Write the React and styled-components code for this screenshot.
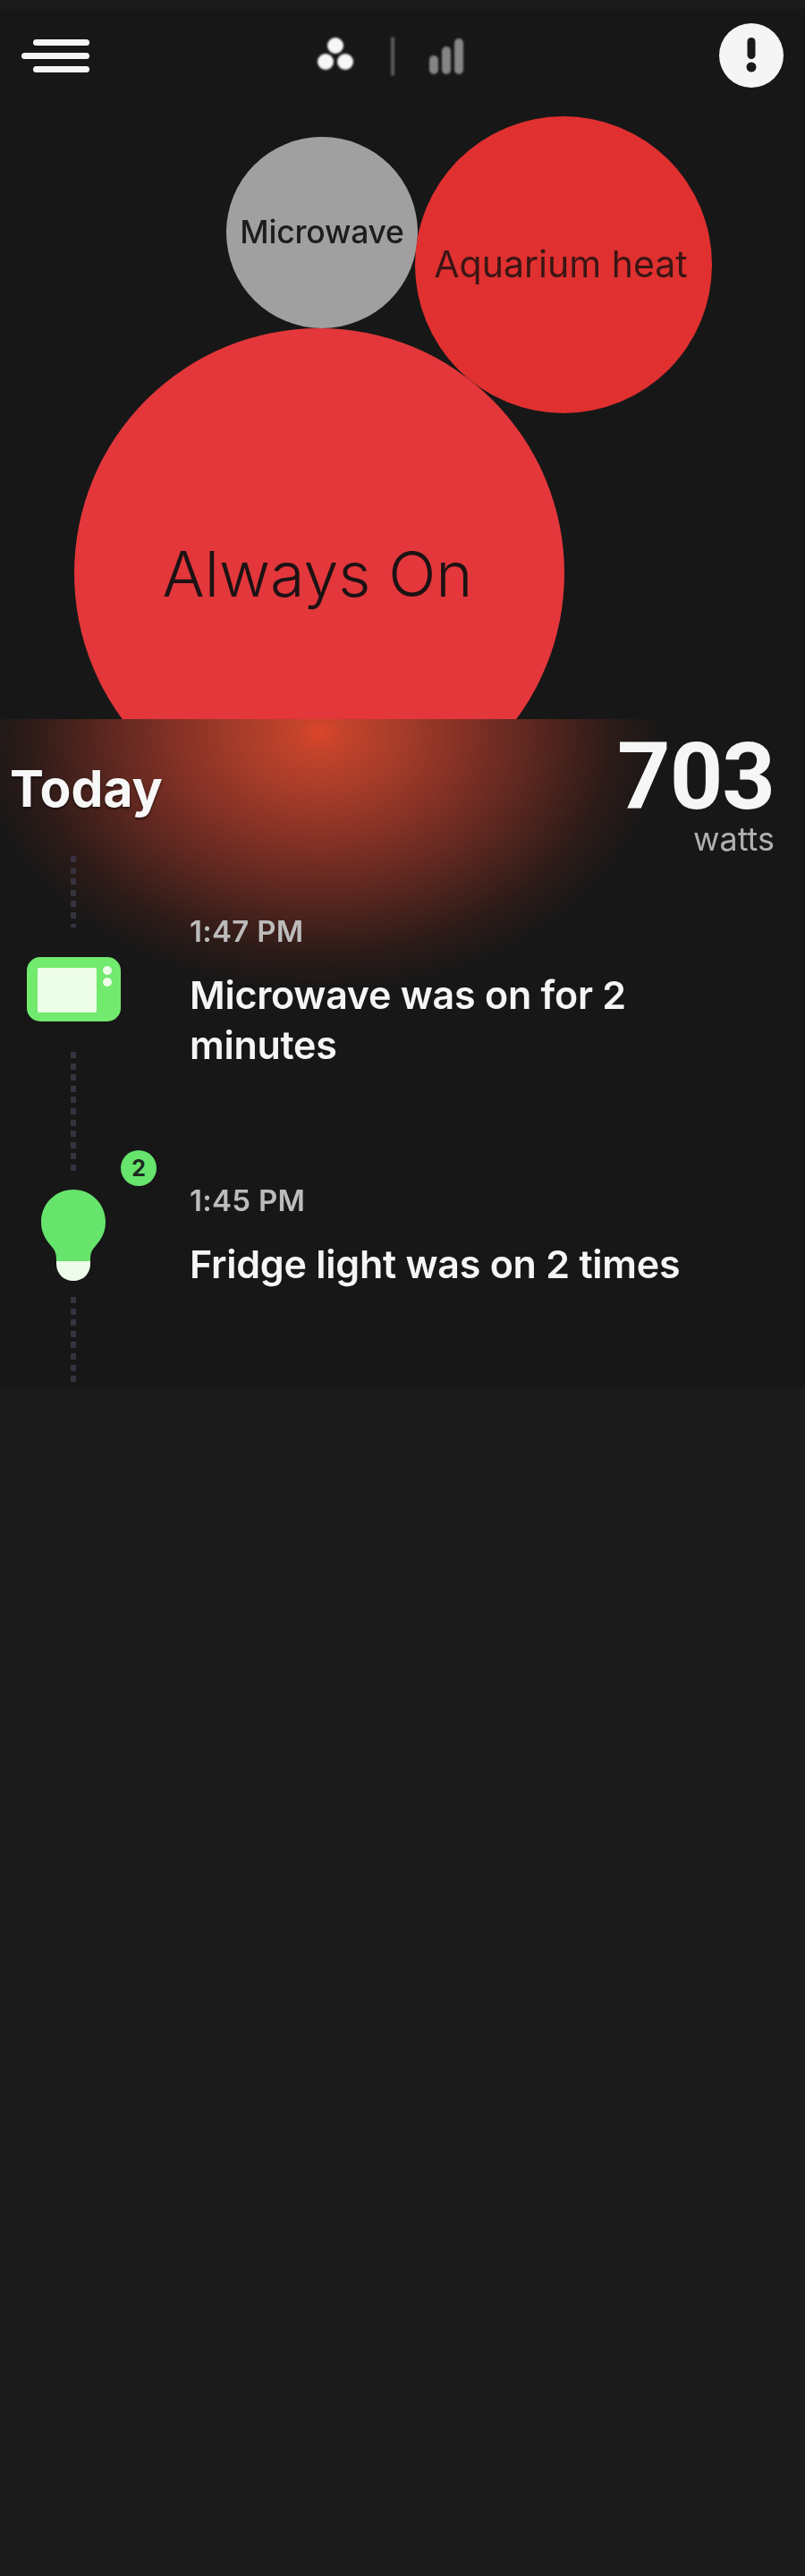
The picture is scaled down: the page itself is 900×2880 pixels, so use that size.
import React from "react";
import styled, { createGlobalStyle } from "styled-components";

const Global = createGlobalStyle`
  html, body { margin: 0; padding: 0; background: #1b1b1b; }
  body { font-family: "Inter", "Liberation Sans", sans-serif; }
`;

const Page = styled.div`
  width: 900px;
  min-height: 2880px;
  padding-top: 10px;
  box-sizing: border-box;
  background: #1b1b1b;
`;

const Screen = styled.main`
  width: 900px;
  height: 1541px;
  background: #171717;
  overflow: hidden;
`;

const Header = styled.header`
  height: 120px;
  padding: 0 24px;
  box-sizing: border-box;
  display: flex;
  align-items: center;
  justify-content: space-between;
`;

const Menu = styled.button`
  width: 76px;
  padding: 0;
  margin-top: -15px;
  border: 0;
  background: none;
  display: flex;
  flex-direction: column;
  align-items: flex-end;
  gap: 8px;
  filter: blur(0.6px);
`;

const MenuLine = styled.span`
  display: block;
  height: 7px;
  width: ${(p) => (p.$long ? 76 : 63)}px;
  border-radius: 4px;
  background: #f5f5f5;
`;

const ViewSwitch = styled.div`
  display: flex;
  align-items: center;
  margin-top: -15px;
  margin-left: -33px;
  filter: blur(0.8px);
`;

const Divider = styled.span`
  display: block;
  width: 4px;
  height: 44px;
  margin: 0 38px 0 40px;
  border-radius: 2px;
  background: #5c5c5c;
`;

const Alert = styled.button`
  width: 72px;
  height: 72px;
  padding: 0;
  margin-top: -16px;
  border: 0;
  border-radius: 50%;
  background: #f5f5f5;
  display: flex;
  align-items: center;
  justify-content: center;
`;

const Chart = styled.section`
  position: relative;
  height: 674px;
  overflow: hidden;
`;

const Bubble = styled.div`
  position: absolute;
  left: ${(p) => p.$x - p.$r}px;
  top: ${(p) => p.$y - p.$r - 130}px;
  width: ${(p) => p.$r * 2}px;
  height: ${(p) => p.$r * 2}px;
  padding-right: ${(p) => p.$nudge || 0}px;
  box-sizing: border-box;
  border-radius: 50%;
  background: ${(p) => p.$bg};
  display: flex;
  align-items: center;
  justify-content: center;
`;

const BubbleLabel = styled.span`
  color: ${(p) => p.$fg};
  font-size: ${(p) => p.$size}px;
  font-weight: ${(p) => p.$weight};
  letter-spacing: ${(p) => p.$track}px;
  line-height: 1.1;
  white-space: nowrap;
  filter: blur(0.4px);
`;

const Content = styled.div`
  height: 747px;
  background: radial-gradient(
    ellipse 385px 290px at 357px 16px,
    #dc462a 0%,
    #c4432b 7%,
    #ac3e2a 20%,
    #843125 42%,
    #5c2720 62%,
    #2c1b18 85%,
    #171717 100%
  ) no-repeat;
`;

const Summary = styled.div`
  height: 153px;
  padding: 0 34px 0 11px;
  display: flex;
  justify-content: space-between;
  align-items: flex-start;
`;

const Today = styled.h1`
  margin: 43px 0 0;
  color: #f7f7f7;
  font-size: 57px;
  font-weight: 700;
  line-height: 70px;
  letter-spacing: 0;
  text-shadow: 0 2px 3px rgba(0, 0, 0, 0.55);
`;

const Reading = styled.div`
  display: flex;
  flex-direction: column;
  align-items: flex-end;
`;

const Watts = styled.div`
  margin-top: 15px;
  color: #f6f6f6;
  font-family: "Roboto", "Liberation Sans", sans-serif;
  font-size: 104px;
  font-weight: 700;
  line-height: 100px;
  letter-spacing: -1px;
`;

const Unit = styled.div`
  margin-top: 1px;
  color: #b0b0b0;
  font-size: 36px;
  line-height: 36px;
  filter: blur(0.6px);
`;

const Entry = styled.article`
  display: grid;
  grid-template-columns: 164px 1fr;
  column-gap: 48px;
  height: ${(p) => p.$height}px;
`;

const Rail = styled.div`
  position: relative;
  display: flex;
  flex-direction: column;
  align-items: center;
  padding-top: ${(p) => p.$top || 0}px;
`;

const Dash = styled.span`
  display: block;
  width: 6px;
  height: ${(p) => p.$height}px;
  margin-bottom: ${(p) => p.$after || 0}px;
  background: repeating-linear-gradient(to bottom, #37323f 0 7px, transparent 7px 12.6px);
`;

const IconSlot = styled.div`
  display: block;
  line-height: 0;
  margin-bottom: ${(p) => p.$after}px;
`;

const Badge = styled.span`
  position: absolute;
  left: 135px;
  top: -28px;
  width: 40px;
  height: 40px;
  border-radius: 50%;
  background: #66e46c;
  color: #1b2a1e;
  font-size: 25px;
  font-weight: 700;
  display: flex;
  align-items: center;
  justify-content: center;
`;

const Body = styled.div`
  padding-top: ${(p) => p.$top}px;
`;

const Time = styled.div`
  color: #bcbcbc;
  font-size: 33px;
  font-weight: 600;
  line-height: 40px;
  letter-spacing: 0.3px;
  filter: blur(0.6px);
`;

const Title = styled.div`
  width: 570px;
  margin-top: ${(p) => p.$gap}px;
  color: #f5f5f5;
  font-size: 43px;
  font-weight: 600;
  line-height: 56px;
  letter-spacing: -0.25px;
  filter: blur(0.5px);
`;

const ThreeDots = () => (
  <svg width="44" height="44" viewBox="0 0 44 44" fill="#f7f7f7">
    <circle cx="22" cy="10" r="9" />
    <circle cx="11" cy="28" r="9" />
    <circle cx="33" cy="28" r="9" />
  </svg>
);

const Bars = () => (
  <svg width="40" height="40" viewBox="0 0 40 40" fill="#858585">
    <rect x="1" y="19" width="10" height="21" rx="5" />
    <rect x="15" y="9" width="10" height="31" rx="5" />
    <rect x="29" y="0" width="10" height="40" rx="5" />
  </svg>
);

const Bang = () => (
  <svg width="14" height="40" viewBox="0 0 14 40" fill="#1a1a1a">
    <rect x="2.5" y="0" width="9" height="24" rx="4.5" />
    <circle cx="7" cy="33" r="5.5" />
  </svg>
);

const MicrowaveIcon = () => (
  <svg width="105" height="72" viewBox="0 0 105 72">
    <rect width="105" height="72" rx="15" fill="#72ea6d" />
    <rect x="12" y="12" width="66" height="50" rx="2" fill="#ecfde8" />
    <circle cx="90" cy="15" r="5" fill="#ecfde8" />
    <circle cx="90" cy="28" r="5" fill="#ecfde8" />
  </svg>
);

const BulbIcon = () => (
  <svg width="72" height="102" viewBox="0 0 72 102">
    <path
      d="M36 0C16 0 0 16 0 36c0 13 6 21 12 28 3.500 4 5 8 5 14v2h38v-2c0-6 1.500-10 5-14 6-7 12-15 12-28C72 16 56 0 36 0Z"
      fill="#66e46c"
    />
    <path d="M17 80h38v3c0 11-8 19-19 19S17 94 17 83Z" fill="#eefcec" />
  </svg>
);

export default function App() {
  return (
    <Page>
      <Global />
      <Screen>
        <Header>
          <Menu aria-label="Menu">
            <MenuLine />
            <MenuLine $long />
            <MenuLine />
          </Menu>
          <ViewSwitch>
            <ThreeDots />
            <Divider />
            <Bars />
          </ViewSwitch>
          <Alert aria-label="Alerts">
            <Bang />
          </Alert>
        </Header>
        <Chart>
          <Bubble $x={360} $y={260} $r={107} $bg="#a0a0a0">
            <BubbleLabel $fg="#1d1d1d" $size={35.5} $weight={500} $track={-0.2}>Microwave</BubbleLabel>
          </Bubble>
          <Bubble $x={630} $y={296} $r={166} $bg="#e03030" $nudge={6}>
            <BubbleLabel $fg="#3a1614" $size={41} $weight={400} $track={0}>Aquarium heat</BubbleLabel>
          </Bubble>
          <Bubble $x={357} $y={641} $r={274} $bg="#e3373b" $nudge={4}>
            <BubbleLabel $fg="#1c1214" $size={70} $weight={350} $track={0}>Always On</BubbleLabel>
          </Bubble>
        </Chart>
        <Content>
          <Summary>
            <Today>Today</Today>
            <Reading>
              <Watts>703</Watts>
              <Unit>watts</Unit>
            </Reading>
          </Summary>
          <Entry $height={357}>
            <Rail>
              <Dash $height={80} $after={33} />
              <IconSlot $after={34}>
                <MicrowaveIcon />
              </IconSlot>
              <Dash $height={138} />
            </Rail>
            <Body $top={64}>
              <Time>1:47 PM</Time>
              <Title $gap={23}>Microwave was on for 2 minutes</Title>
            </Body>
          </Entry>
          <Entry $height={237}>
            <Rail $top={16}>
              <Badge>2</Badge>
              <IconSlot $after={18}>
                <BulbIcon />
              </IconSlot>
              <Dash $height={100} />
            </Rail>
            <Body $top={8}>
              <Time>1:45 PM</Time>
              <Title $gap={23}>Fridge light was on 2 times</Title>
            </Body>
          </Entry>
        </Content>
      </Screen>
    </Page>
  );
}
